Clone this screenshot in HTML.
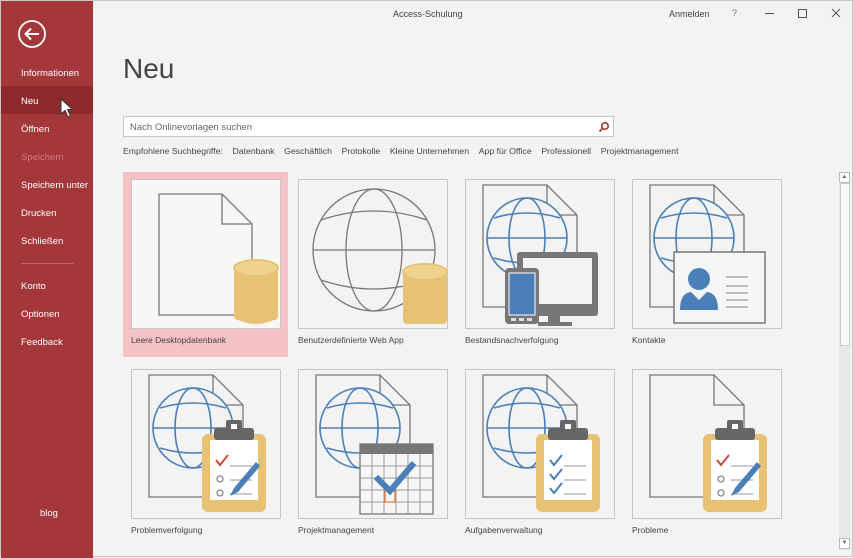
<!DOCTYPE html>
<html><head><meta charset="utf-8"><style>
*{margin:0;padding:0;box-sizing:border-box}
body{width:853px;height:557px;background:#f3f3f3;font-family:"Liberation Sans",sans-serif;position:relative;overflow:hidden;border:1px solid #c8c8c8}
.side{position:absolute;left:0;top:0;width:92px;height:557px;background:#a4373a}
.side div{position:absolute;left:20px;color:#fff;font-size:9.5px}
.side .sel{position:absolute;left:0;top:85px;width:92px;height:28px;background:#8e2a2d}
.t{position:absolute;font-size:9px;color:#444}
.box{position:absolute;width:150px;height:150px;border:1px solid #c6c6c6;background:#f3f3f3}
.lbl{position:absolute;font-size:8.5px;color:#444}
</style></head><body>
<div class="side">
<svg style="position:absolute;left:16px;top:18px" width="30" height="30"><circle cx="15" cy="15" r="13" fill="none" stroke="#fff" stroke-width="1.8"/><path d="M22 15H9M14 9.5L8.5 15L14 20.5" fill="none" stroke="#fff" stroke-width="2"/></svg>
<div class="sel"></div>
<div style="top:67px">Informationen</div>
<div style="top:95px">Neu</div>
<div style="top:123px">Öffnen</div>
<div style="top:151px;color:#d07a7c">Speichern</div>
<div style="top:179px">Speichern unter</div>
<div style="top:207px">Drucken</div>
<div style="top:235px">Schließen</div>
<div style="top:262px;left:20px;width:53px;height:1px;background:#c06264"></div>
<div style="top:280px">Konto</div>
<div style="top:308px">Optionen</div>
<div style="top:336px">Feedback</div>
<div style="top:507px;left:39px">blog</div>
<svg style="position:absolute;left:59px;top:97px" width="16" height="22"><path d="M1 1L1 16L5 12.5L8 19L10.5 18L7.5 11.5L12.5 11.5Z" fill="#fff" stroke="#333" stroke-width="1"/></svg>
</div>
<div class="t" style="left:392px;top:8px">Access-Schulung</div>
<div class="t" style="left:668px;top:8px">Anmelden</div>
<div class="t" style="left:731px;top:7px;color:#777">?</div>
<svg style="position:absolute;left:760px;top:4px" width="90" height="16"><path d="M4 8.5H13" stroke="#555"/><rect x="37.5" y="4.5" width="8" height="8" fill="none" stroke="#555"/><path d="M71 4L79 12M79 4L71 12" stroke="#555"/></svg>
<div style="position:absolute;left:122px;top:52px;font-size:28px;color:#444">Neu</div>
<div style="position:absolute;left:122px;top:115px;width:491px;height:21px;border:1px solid #c6c6c6;background:#fff;font-size:9.5px;color:#666;padding:5px 6px">Nach Onlinevorlagen suchen</div>
<svg style="position:absolute;left:597px;top:120px" width="12" height="12"><circle cx="7" cy="5" r="3.2" fill="none" stroke="#a4373a" stroke-width="1.6"/><path d="M4.7 7.3L1.5 10.5" stroke="#a4373a" stroke-width="1.8"/></svg>
<div class="t" style="left:122px;top:145px;font-size:8.7px">Empfohlene Suchbegriffe:&nbsp;&nbsp;&nbsp;&nbsp;Datenbank&nbsp;&nbsp;&nbsp;&nbsp;Geschäftlich&nbsp;&nbsp;&nbsp;&nbsp;Protokolle&nbsp;&nbsp;&nbsp;&nbsp;Kleine Unternehmen&nbsp;&nbsp;&nbsp;&nbsp;App für Office&nbsp;&nbsp;&nbsp;&nbsp;Professionell&nbsp;&nbsp;&nbsp;&nbsp;Projektmanagement</div>
<div style="position:absolute;left:122px;top:171px;width:165px;height:185px;background:#f4c2c4"></div>
<svg width="0" height="0" style="position:absolute"><defs>
<g id="doc"><path d="M17 5H81L111 35V127H17Z" fill="#f3f3f3" stroke="#777" stroke-width="1.3"/><path d="M81 5V35H111" fill="none" stroke="#777" stroke-width="1.3"/></g>
<g id="bg"><circle cx="61" cy="58" r="40" fill="#f3f3f3" stroke="#4a7fb8" stroke-width="1.6"/><ellipse cx="61" cy="58" rx="18" ry="40" fill="none" stroke="#4a7fb8" stroke-width="1.6"/><path d="M21 58H101M28 38Q61 28 94 38M28 78Q61 88 94 78" fill="none" stroke="#4a7fb8" stroke-width="1.6"/></g>
<g id="clip"><rect x="70" y="64" width="64" height="78" rx="6" fill="#e8c274"/><rect x="78" y="70" width="48" height="60" fill="#fff"/><rect x="82" y="58" width="40" height="12" rx="3" fill="#666"/><rect x="94" y="50" width="16" height="12" rx="2" fill="#666"/><rect x="99" y="54" width="6" height="5" fill="#fff"/></g>
</defs></svg>
<!-- row1 -->
<div class="box" style="left:130px;top:178px;background:#f7f7f7"><svg width="150" height="150"><path d="M27 14H90L120 44V135H27Z" fill="none" stroke="#777" stroke-width="1.3"/><path d="M90 14V44H120" fill="none" stroke="#777" stroke-width="1.3"/><rect x="102" y="86" width="44" height="54" rx="4" fill="#e8c274"/><ellipse cx="124" cy="88" rx="22" ry="8" fill="#f0d28f" stroke="#e8c274" stroke-width="2"/><path d="M102 138Q124 150 146 138Z" fill="#e8c274"/></svg></div>
<div class="lbl" style="left:130px;top:334px">Leere Desktopdatenbank</div>
<div class="box" style="left:297px;top:178px"><svg width="150" height="150"><g fill="none" stroke="#777" stroke-width="1.3"><circle cx="75" cy="70" r="61"/><ellipse cx="75" cy="70" rx="28" ry="61"/><path d="M14 70H136M22 40Q75 22 128 40M22 100Q75 118 128 100"/></g><rect x="104" y="90" width="44" height="54" rx="4" fill="#e8c274"/><ellipse cx="126" cy="92" rx="22" ry="8" fill="#f0d28f" stroke="#e8c274" stroke-width="2"/></svg></div>
<div class="lbl" style="left:297px;top:334px">Benutzerdefinierte Web App</div>
<div class="box" style="left:464px;top:178px"><svg width="150" height="150"><use href="#doc"/><use href="#bg"/><rect x="51" y="72" width="81" height="64" rx="3" fill="#777"/><rect x="57" y="78" width="69" height="46" fill="#f3f3f3"/><rect x="82" y="136" width="12" height="7" fill="#777"/><rect x="72" y="142" width="34" height="4" fill="#777"/><rect x="39" y="88" width="34" height="56" rx="4" fill="#777"/><rect x="43" y="93" width="26" height="42" fill="#4a7fb8" stroke="#fff" stroke-width="1"/><rect x="45" y="138" width="5" height="3" fill="#ddd"/><rect x="53" y="138" width="5" height="3" fill="#ddd"/><rect x="61" y="138" width="5" height="3" fill="#ddd"/></svg></div>
<div class="lbl" style="left:464px;top:334px">Bestandsnachverfolgung</div>
<div class="box" style="left:631px;top:178px"><svg width="150" height="150"><use href="#doc"/><use href="#bg"/><rect x="41" y="72" width="91" height="71" fill="#f6f6f6" stroke="#777" stroke-width="1.5"/><circle cx="66" cy="99" r="11" fill="#4a7fb8"/><path d="M47 130Q47 113 58 112L66 120L74 112Q85 113 85 130Z" fill="#4a7fb8"/><path d="M93 97H115M93 106H115M93 113H115M93 120H115M93 127H115" stroke="#999" stroke-width="1.3"/></svg></div>
<div class="lbl" style="left:631px;top:334px">Kontakte</div>
<!-- row2 -->
<div class="box" style="left:130px;top:368px"><svg width="150" height="150"><use href="#doc"/><use href="#bg"/><use href="#clip"/><path d="M84 90L88 95L96 85" fill="none" stroke="#cc4a3a" stroke-width="2"/><path d="M98 96H120M98 110H120M98 124H120" stroke="#aaa" stroke-width="1.3"/><circle cx="88" cy="109" r="3" fill="none" stroke="#888" stroke-width="1.3"/><circle cx="88" cy="123" r="3" fill="none" stroke="#888" stroke-width="1.3"/><path d="M124 92L102 118L98 126L106 122L128 96Z" fill="#4a7fb8"/></svg></div>
<div class="lbl" style="left:130px;top:524px">Problemverfolgung</div>
<div class="box" style="left:297px;top:368px"><svg width="150" height="150"><use href="#doc"/><use href="#bg"/><rect x="61" y="74" width="73" height="70" fill="#f6f6f6" stroke="#777" stroke-width="1.3"/><rect x="61" y="74" width="73" height="10" fill="#777"/><path d="M73 84V144M85 84V144M97 84V144M109 84V144M121 84V144M61 96H134M61 108H134M61 120H134M61 132H134" stroke="#999" stroke-width="1"/><rect x="86" y="121" width="10" height="11" fill="none" stroke="#e07a3a" stroke-width="1.3"/><path d="M77 107L91 121L115 93" fill="none" stroke="#4a7fb8" stroke-width="6"/></svg></div>
<div class="lbl" style="left:297px;top:524px">Projektmanagement</div>
<div class="box" style="left:464px;top:368px"><svg width="150" height="150"><use href="#doc"/><use href="#bg"/><use href="#clip"/><g fill="none" stroke="#4a7fb8" stroke-width="2"><path d="M84 90L88 95L96 85M84 104L88 109L96 99M84 118L88 123L96 113"/></g><path d="M98 96H120M98 110H120M98 124H120" stroke="#aaa" stroke-width="1.3"/></svg></div>
<div class="lbl" style="left:464px;top:524px">Aufgabenverwaltung</div>
<div class="box" style="left:631px;top:368px"><svg width="150" height="150"><use href="#doc"/><use href="#clip"/><path d="M84 90L88 95L96 85" fill="none" stroke="#cc4a3a" stroke-width="2"/><path d="M98 96H120M98 110H120M98 124H120" stroke="#aaa" stroke-width="1.3"/><circle cx="88" cy="109" r="3" fill="none" stroke="#888" stroke-width="1.3"/><circle cx="88" cy="123" r="3" fill="none" stroke="#888" stroke-width="1.3"/><path d="M124 92L102 118L98 126L106 122L128 96Z" fill="#4a7fb8"/></svg></div>
<div class="lbl" style="left:631px;top:524px">Probleme</div>
<!-- scrollbar -->
<div style="position:absolute;left:838px;top:171px;width:11px;height:378px;background:#e8e8e8"></div>
<div style="position:absolute;left:838px;top:171px;width:11px;height:11px;border:1px solid #bbb;background:#fff;font-size:6px;color:#666;text-align:center;line-height:9px">▲</div>
<div style="position:absolute;left:839px;top:182px;width:10px;height:163px;border:1px solid #ccc;background:#f7f7f7"></div>
<div style="position:absolute;left:838px;top:537px;width:11px;height:11px;border:1px solid #bbb;background:#fff;font-size:6px;color:#666;text-align:center;line-height:9px">▼</div>
</body></html>
